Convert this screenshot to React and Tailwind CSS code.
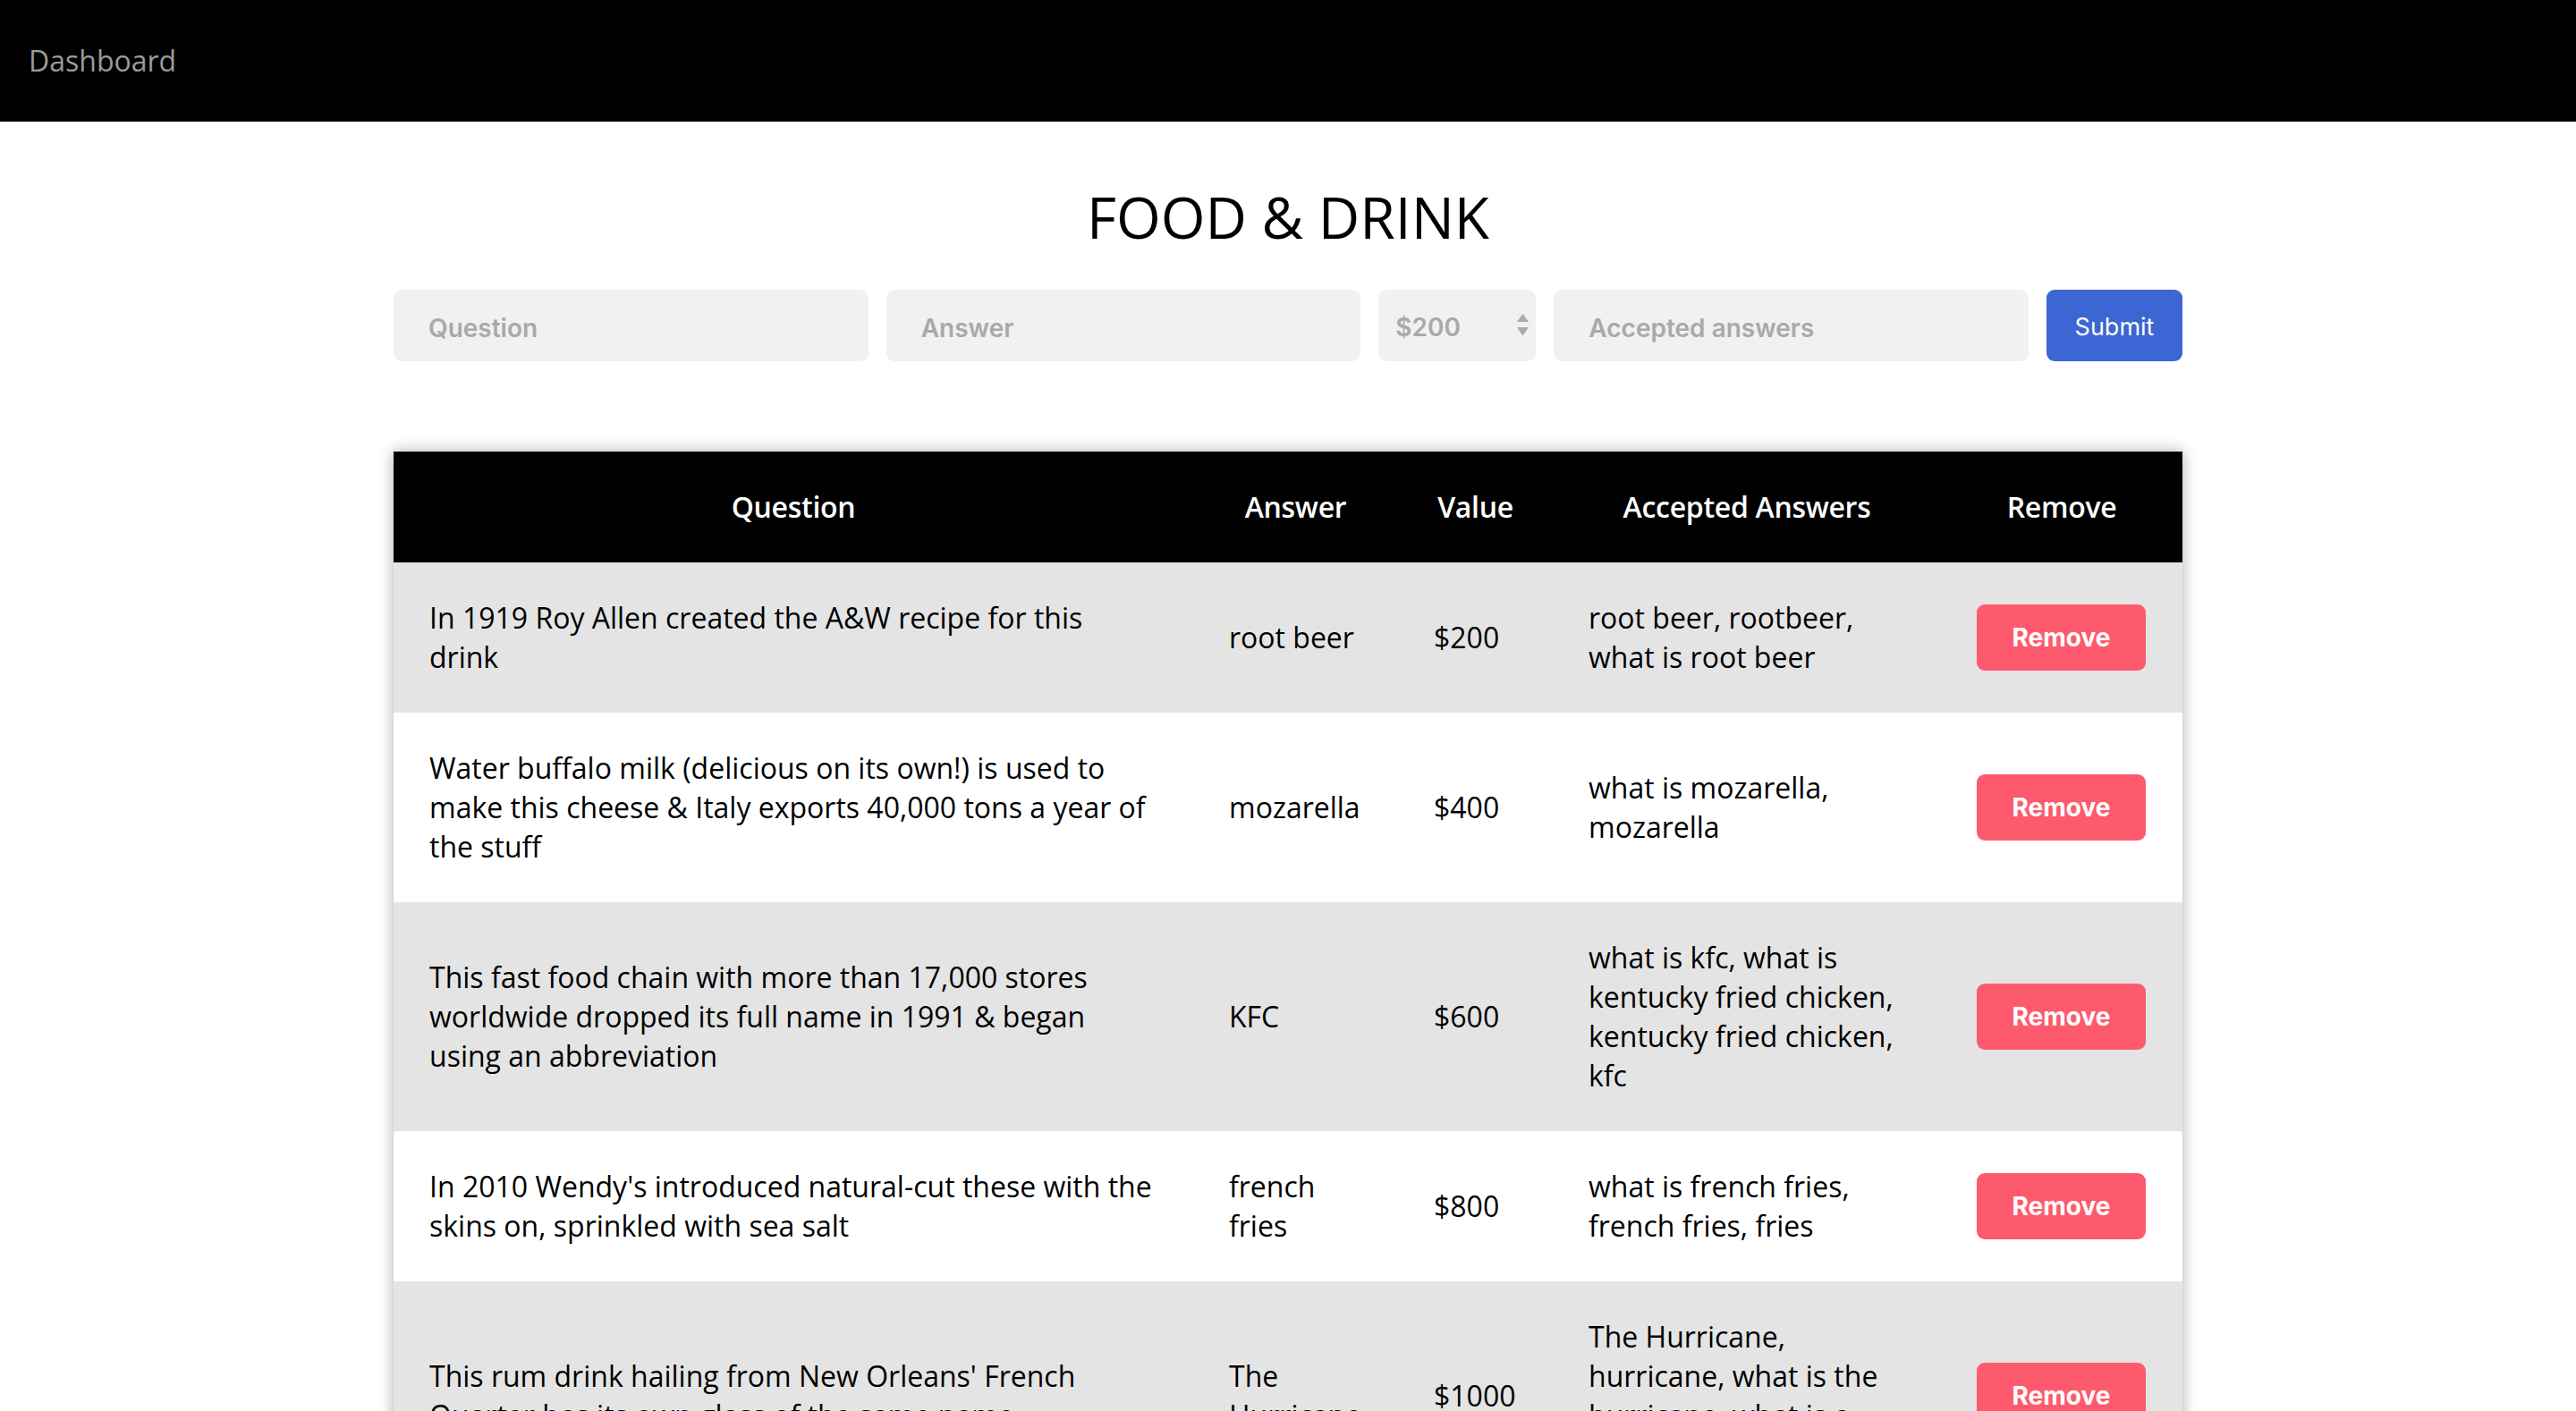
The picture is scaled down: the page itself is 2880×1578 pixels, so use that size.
import React from "react";

const rows = [
  {
    q: "In 1919 Roy Allen created the A&W recipe for this drink",
    a: "root beer",
    v: "$200",
    acc: "root beer, rootbeer, what is root beer",
  },
  {
    q: "Water buffalo milk (delicious on its own!) is used to make this cheese & Italy exports 40,000 tons a year of the stuff",
    a: "mozarella",
    v: "$400",
    acc: "what is mozarella, mozarella",
  },
  {
    q: "This fast food chain with more than 17,000 stores worldwide dropped its full name in 1991 & began using an abbreviation",
    a: "KFC",
    v: "$600",
    acc: "what is kfc, what is kentucky fried chicken, kentucky fried chicken, kfc",
  },
  {
    q: "In 2010 Wendy's introduced natural-cut these with the skins on, sprinkled with sea salt",
    a: "french fries",
    v: "$800",
    acc: "what is french fries, french fries, fries",
  },
  {
    q: "This rum drink hailing from New Orleans' French Quarter has its own glass of the same name",
    a: "The Hurricane",
    v: "$1000",
    acc: "The Hurricane, hurricane, what is the hurricane, what is a hurricane",
  },
];

function TextInput({ placeholder }) {
  return (
    <input
      type="text"
      placeholder={placeholder}
      className="h-full min-w-0 flex-1 rounded-[9px] bg-[#f1f1f1] pl-[39px] pr-4 pt-[5px] font-['Inter',sans-serif] text-[28px] font-semibold text-[#333] outline-none placeholder:text-[#a9a9a9]"
    />
  );
}

export default function App() {
  return (
    <div className="min-h-screen bg-white font-['Open_Sans',sans-serif] text-black">
      <nav className="flex h-[136px] items-center bg-black px-8">
        <a href="#" className="text-[32px] leading-[44px] text-[#9a9a9a]">
          Dashboard
        </a>
      </nav>

      <main className="mx-auto w-[2000px]">
        <h1 className="mt-[63px] text-center text-[64px] font-normal leading-[87px] text-black">
          FOOD &amp; DRINK
        </h1>

        <form
          className="mt-[38px] flex h-[80px] gap-5"
          onSubmit={(e) => e.preventDefault()}
        >
          <TextInput placeholder="Question" />
          <TextInput placeholder="Answer" />
          <div className="relative h-full w-[176px] shrink-0">
            <select
              defaultValue="200"
              className="h-full w-full appearance-none rounded-[9px] bg-[#f1f1f1] pl-[19px] pt-[3px] font-['Inter',sans-serif] text-[28px] font-semibold text-[#a9a9a9] outline-none"
            >
              <option value="200">$200</option>
              <option value="400">$400</option>
              <option value="600">$600</option>
              <option value="800">$800</option>
              <option value="1000">$1000</option>
            </select>
            <svg
              className="pointer-events-none absolute right-[8px] top-[27px]"
              width="13"
              height="25"
              viewBox="0 0 13 25"
            >
              <path d="M6.5 0 L13 9 L0 9 Z" fill="#a9a9a9" />
              <path d="M0 15 L13 15 L6.5 24.5 Z" fill="#a9a9a9" />
            </svg>
          </div>
          <TextInput placeholder="Accepted answers" />
          <button
            type="submit"
            className="h-full w-[152px] shrink-0 rounded-[9px] bg-[#3c66d3] pt-[4px] font-['Inter',sans-serif] text-[27px] font-normal text-white"
          >
            Submit
          </button>
        </form>

        <table className="mt-[101px] w-full table-fixed border-collapse text-[32px] leading-[44px] shadow-[0_0_16px_rgba(0,0,0,0.32)]">
          <colgroup>
            <col className="w-[894px]" />
            <col className="w-[229px]" />
            <col className="w-[173px]" />
            <col className="w-[434px]" />
            <col className="w-[270px]" />
          </colgroup>
          <thead>
            <tr className="bg-black text-white">
              <th className="p-10 text-center font-semibold tracking-[-0.3px]">Question</th>
              <th className="p-10 text-center font-semibold tracking-[-0.3px]">Answer</th>
              <th className="p-10 text-center font-semibold tracking-[-0.3px]">Value</th>
              <th className="p-10 text-center font-semibold tracking-[-0.3px]">Accepted Answers</th>
              <th className="p-10 text-center font-semibold tracking-[-0.3px]">Remove</th>
            </tr>
          </thead>
          <tbody>
            {rows.map((r, i) => (
              <tr key={i} className={i % 2 === 0 ? "bg-[#e4e4e4]" : "bg-white"}>
                <td className="p-10 align-middle">{r.q}</td>
                <td className="p-10 align-middle">{r.a}</td>
                <td className="p-10 align-middle">{r.v}</td>
                <td className="p-10 align-middle">{r.acc}</td>
                <td className="p-10 align-middle">
                  <button
                    type="button"
                    className="h-[74px] w-[189px] rounded-[9px] bg-[#fe5a6e] font-['Inter',sans-serif] text-[28px] font-bold text-white"
                  >
                    Remove
                  </button>
                </td>
              </tr>
            ))}
          </tbody>
        </table>
        <div className="h-20" />
      </main>
    </div>
  );
}
